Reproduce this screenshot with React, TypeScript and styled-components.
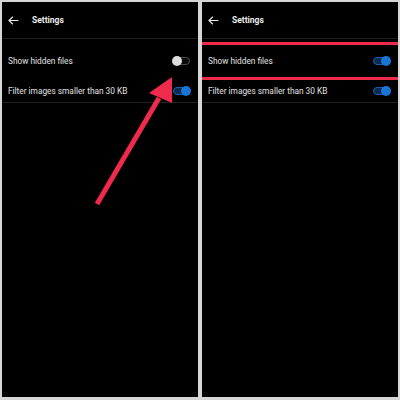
import * as React from "react";
import styled, { createGlobalStyle } from "styled-components";

const GlobalStyle = createGlobalStyle`
  html, body {
    margin: 0;
    padding: 0;
    background: #d6d6d6;
  }
  body {
    font-family: Roboto, "Liberation Sans", sans-serif;
  }
`;

type Setting = { label: string; on: boolean; highlight?: boolean };

const Toggle: React.FunctionComponent<{ on: boolean }> = ({ on }) => (
  <Switch $on={on}>
    <Knob $on={on} />
  </Switch>
);

const BackIcon = () => (
  <svg width="11" height="9" viewBox="0 0 11 9">
    <path
      d="M10.5 4.5H1M4.8 0.8L1 4.5l3.8 3.7"
      fill="none"
      stroke="#e6e6e6"
      strokeWidth="1.2"
    />
  </svg>
);

const PhoneScreen: React.FunctionComponent<{
  settings: Setting[];
  children?: React.ReactNode;
}> = ({ settings, children }) => {
  const [first, second] = settings;
  return (
    <Screen>
      <Header>
        <BackIcon />
        <Title>Settings</Title>
      </Header>
      <FirstRow $highlight={!!first.highlight}>
        <Label>{first.label}</Label>
        <Toggle on={first.on} />
      </FirstRow>
      <SecondRow>
        <Label>{second.label}</Label>
        <Toggle on={second.on} />
      </SecondRow>
      {children}
    </Screen>
  );
};

const App: React.FunctionComponent = () => {
  return (
    <>
      <GlobalStyle />
      <Frame>
        <PhoneScreen
          settings={[
            { label: "Show hidden files", on: false },
            { label: "Filter images smaller than 30 KB", on: true },
          ]}
        >
          <Pointer width="196" height="395" viewBox="0 0 196 395">
            <path d="M95 202L157 96" stroke="#f02a4d" strokeWidth="5" />
            <path d="M170 75L147 91L170 101Z" fill="#f02a4d" />
          </Pointer>
        </PhoneScreen>
        <PhoneScreen
          settings={[
            { label: "Show hidden files", on: true, highlight: true },
            { label: "Filter images smaller than 30 KB", on: true },
          ]}
        />
      </Frame>
    </>
  );
};

export default App;

const Frame = styled.div`
  display: grid;
  grid-template-columns: 196px 196px;
  gap: 4px;
  padding: 2px 2px 3px;
  width: 400px;
  height: 400px;
  box-sizing: border-box;
`;

const Screen = styled.div`
  position: relative;
  background: #000;
  display: flex;
  flex-direction: column;
  overflow: hidden;
`;

const Header = styled.div`
  display: flex;
  align-items: center;
  gap: 13px;
  height: 36px;
  padding: 0 6px;
  border-bottom: 1px solid #1f1f1f;
`;

const Title = styled.span`
  color: #ececec;
  font-size: 8.5px;
  font-weight: 700;
`;

const Row = styled.div`
  display: flex;
  align-items: center;
  justify-content: space-between;
  padding: 0 6px 0 6px;
`;

const FirstRow = styled(Row)<{ $highlight: boolean }>`
  margin-top: 3px;
  height: 32px;
  border-top: 3px solid ${({ $highlight }) => ($highlight ? "#ef2b4b" : "transparent")};
  border-bottom: 3px solid ${({ $highlight }) => ($highlight ? "#ef2b4b" : "transparent")};
`;

const SecondRow = styled(Row)`
  height: 22px;
  border-bottom: 1px solid #1f1f1f;
`;

const Label = styled.span`
  color: #e2e2e2;
  font-size: 8.3px;
`;

const Switch = styled.div<{ $on: boolean }>`
  position: relative;
  width: 17px;
  height: 8px;
  box-sizing: border-box;
  border-radius: 4px;
  margin-right: 2px;
  background: ${({ $on }) => ($on ? "#0b2a4e" : "#0a0a0a")};
  border: 1px solid ${({ $on }) => ($on ? "#1b5fae" : "#4a4a4a")};
`;

const Knob = styled.div<{ $on: boolean }>`
  position: absolute;
  top: -2px;
  left: ${({ $on }) => ($on ? "7px" : "-2px")};
  width: 10px;
  height: 10px;
  border-radius: 50%;
  background: ${({ $on }) => ($on ? "#1a74d6" : "#dcdcdc")};
`;

const Pointer = styled.svg`
  position: absolute;
  top: 0;
  left: 0;
  pointer-events: none;
`;
